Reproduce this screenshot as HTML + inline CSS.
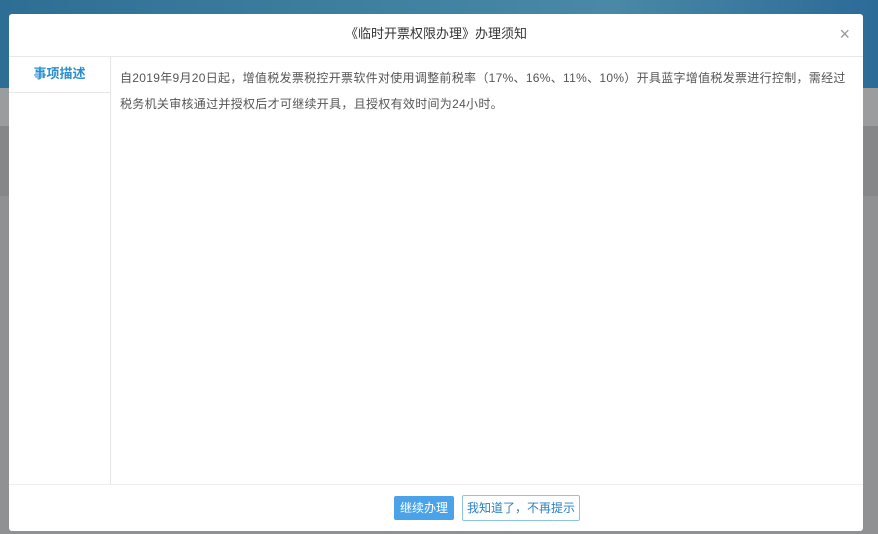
<!DOCTYPE html>
<html><head><meta charset="utf-8"><style>
body{margin:0;width:878px;height:534px;position:relative;overflow:hidden;background:#8f9193;font-family:"Liberation Sans","Noto Sans CJK SC",sans-serif;}
.top{position:absolute;left:0;top:0;width:878px;height:88px;background:linear-gradient(90deg,#2f6e94,#3e7f9f 40%,#4a88a6 70%,#2c6a98);}
.g1{position:absolute;left:0;top:88px;width:878px;height:38px;background:#9a9c9e;}
.g2{position:absolute;left:0;top:126px;width:878px;height:70px;background:#858789;}
.dlg{position:absolute;left:9px;top:14px;width:854px;height:517px;background:#fff;border-radius:3px;}
.hd{height:42px;border-bottom:1px solid #e8e8e8;text-align:center;line-height:40px;font-size:13px;color:#333;}
.x{position:absolute;right:13px;top:10px;color:#999;font-size:18px;line-height:20px;}
.side{position:absolute;left:0;top:43px;width:101px;height:427px;border-right:1px solid #e5e5e5;}
.tab{height:35px;border-bottom:1px solid #e5e5e5;color:#2a8fd0;font-size:13px;font-weight:bold;text-align:center;line-height:34px;}
.txt{position:absolute;left:111px;top:51px;width:732px;font-size:12px;color:#555;line-height:26px;letter-spacing:0.3px;}
.ft{position:absolute;left:0;top:470px;width:854px;height:47px;border-top:1px solid #eee;}
.b1{position:absolute;left:385px;top:11px;width:60px;height:24px;background:#4aa3e8;color:#fff;font-size:12px;line-height:24px;text-align:center;border-radius:2px;}
.b2{position:absolute;left:453px;top:10px;width:116px;height:24px;border:1px solid #8cc4e6;color:#2a7fc0;font-size:12px;line-height:24px;text-align:center;border-radius:2px;}
</style></head><body>
<div class="top"></div><div class="g1"></div><div class="g2"></div>
<div class="dlg">
<div class="hd">《临时开票权限办理》办理须知</div><div class="x">×</div>
<div class="side"><div class="tab">事项描述</div></div>
<div class="txt">自2019年9月20日起，增值税发票税控开票软件对使用调整前税率（17%、16%、11%、10%）开具蓝字增值税发票进行控制，需经过<br>税务机关审核通过并授权后才可继续开具，且授权有效时间为24小时。</div>
<div class="ft"><div class="b1">继续办理</div><div class="b2">我知道了，不再提示</div></div>
</div>
</body></html>
